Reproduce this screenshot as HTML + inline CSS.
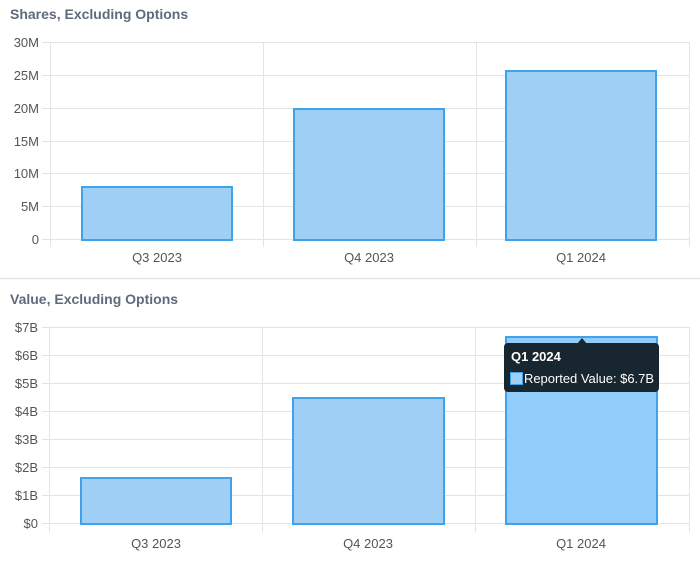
<!DOCTYPE html>
<html><head><meta charset="utf-8"><style>
html,body{margin:0;padding:0;background:#fff;width:700px;height:562px;overflow:hidden}
svg{display:block;font-family:"Liberation Sans",sans-serif}
</style></head><body>
<svg width="700" height="562" viewBox="0 0 700 562">
<g font-size="14" fill="#5f6b7c" font-weight="bold">
<text x="10" y="19">Shares, Excluding Options</text>
<text x="10" y="304">Value, Excluding Options</text>
</g>
<line x1="0" y1="278.5" x2="700" y2="278.5" stroke="#e6e6e6" stroke-width="1.5"/>
<g stroke="#e4e4e4" stroke-width="1">
<line x1="42" y1="42.5" x2="690" y2="42.5"/><line x1="42" y1="75.5" x2="690" y2="75.5"/>
<line x1="42" y1="108.5" x2="690" y2="108.5"/><line x1="42" y1="141.5" x2="690" y2="141.5"/>
<line x1="42" y1="173.5" x2="690" y2="173.5"/><line x1="42" y1="206.5" x2="690" y2="206.5"/>
<line x1="42" y1="239.5" x2="690" y2="239.5"/>
<line x1="50.5" y1="42" x2="50.5" y2="247"/><line x1="263.5" y1="42" x2="263.5" y2="247"/>
<line x1="476.5" y1="42" x2="476.5" y2="247"/><line x1="689.5" y1="42" x2="689.5" y2="247"/>
</g>
<g font-size="13" fill="#555" text-anchor="end">
<text x="39" y="47">30M</text><text x="39" y="80">25M</text><text x="39" y="113">20M</text>
<text x="39" y="146">15M</text><text x="39" y="178">10M</text><text x="39" y="211">5M</text><text x="39" y="244">0</text>
</g>
<g fill="#9fcff5" stroke="#3fa2ea" stroke-width="2">
<rect x="82" y="187" width="150" height="53"/>
<rect x="294" y="109" width="150" height="131"/>
<rect x="506" y="71" width="150" height="169"/>
</g>
<g font-size="13" fill="#555" text-anchor="middle">
<text x="157" y="262">Q3 2023</text><text x="369" y="262">Q4 2023</text><text x="581" y="262">Q1 2024</text>
</g>
<g stroke="#e4e4e4" stroke-width="1">
<line x1="42" y1="327.5" x2="690" y2="327.5"/><line x1="42" y1="355.5" x2="690" y2="355.5"/>
<line x1="42" y1="383.5" x2="690" y2="383.5"/><line x1="42" y1="411.5" x2="690" y2="411.5"/>
<line x1="42" y1="439.5" x2="690" y2="439.5"/><line x1="42" y1="467.5" x2="690" y2="467.5"/>
<line x1="42" y1="495.5" x2="690" y2="495.5"/><line x1="42" y1="523.5" x2="690" y2="523.5"/>
<line x1="49.5" y1="327" x2="49.5" y2="532"/><line x1="262.5" y1="327" x2="262.5" y2="532"/>
<line x1="475.5" y1="327" x2="475.5" y2="532"/><line x1="689.5" y1="327" x2="689.5" y2="532"/>
</g>
<g font-size="13" fill="#555" text-anchor="end">
<text x="38" y="332">$7B</text><text x="38" y="360">$6B</text><text x="38" y="388">$5B</text>
<text x="38" y="416">$4B</text><text x="38" y="444">$3B</text><text x="38" y="472">$2B</text>
<text x="38" y="500">$1B</text><text x="38" y="528">$0</text>
</g>
<g stroke="#3fa2ea" stroke-width="2">
<rect x="81" y="478" width="150" height="46" fill="#9fcff5"/>
<rect x="293" y="398" width="151" height="126" fill="#9fcff5"/>
<rect x="506" y="337" width="151" height="187" fill="#92ccfb"/>
</g>
<g font-size="13" fill="#555" text-anchor="middle">
<text x="156" y="548">Q3 2023</text><text x="368" y="548">Q4 2023</text><text x="581" y="548">Q1 2024</text>
</g>
<path d="M577 344 L582 338 L587 344 Z" fill="#18262f"/>
<rect x="504" y="343" width="155" height="49" rx="4" fill="#18262f"/>
<text x="511" y="361" font-size="13" font-weight="bold" fill="#fff">Q1 2024</text>
<rect x="510.5" y="372.5" width="12" height="12" fill="#9fcff5" stroke="#3fa2ea" stroke-width="1"/>
<text x="524" y="383" font-size="13" fill="#fff" textLength="130">Reported Value: $6.7B</text>
</svg>
</body></html>
